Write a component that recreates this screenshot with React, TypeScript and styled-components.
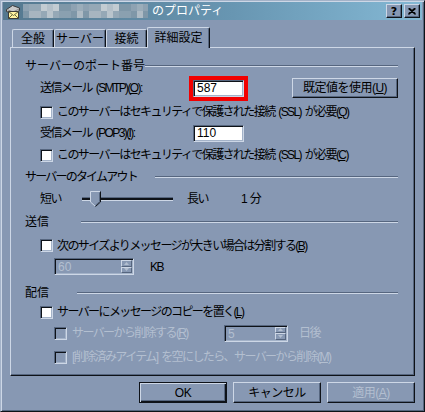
import React from 'react';
import styled, { createGlobalStyle } from 'styled-components';

const C = {
  face: '#8798b3',
  hi: '#cdd7e6',
  light: '#a3b2c8',
  shadow: '#56667f',
  dark: '#0e1218',
  gray: '#b3bfd0',
};

const Global = createGlobalStyle`
  html, body { margin: 0; padding: 0; background: ${C.face}; }
  body {
    font-family: "Liberation Sans", "Noto Sans CJK JP", sans-serif;
    font-size: 12px;
    color: #000;
  }
  #root { width: 425px; height: 412px; }
  u { text-underline-offset: 1px; }
`;

const Window = styled.div`
  box-sizing: border-box;
  width: 425px;
  height: 412px;
  background: ${C.face};
  border: 1px solid;
  border-color: ${C.light} ${C.dark} ${C.dark} ${C.light};
  box-shadow: inset 1px 1px ${C.hi}, inset -1px -1px ${C.shadow};
  padding: 1px 2px 2px 2px;
  display: flex;
  flex-direction: column;
`;

const TitleBar = styled.div`
  height: 18px;
  flex: none;
  display: flex;
  align-items: center;
  padding: 0 2px 0 2px;
  background: linear-gradient(to right, #54788f 0%, #6896b2 55%, #84b8d4 100%);
`;

const TitleText = styled.span`
  color: #fff;
  font-size: 12px;
  line-height: 14px;
  margin-left: 4px;
`;

const CaptionButtons = styled.div`
  margin-left: auto;
  display: flex;
  gap: 2px;
`;

const CapBtn = styled.div`
  box-sizing: border-box;
  width: 16px;
  height: 14px;
  background: ${C.face};
  border: 1px solid;
  border-color: ${C.hi} ${C.dark} ${C.dark} ${C.hi};
  box-shadow: inset -1px -1px ${C.shadow};
  display: flex;
  align-items: center;
  justify-content: center;
  font-family: "DejaVu Sans", sans-serif;
  font-weight: bold;
  font-size: 11px;
  line-height: 11px;
`;

const Body = styled.div`
  flex: 1;
  display: flex;
  flex-direction: column;
  padding: 7px 7px 0 7px;
`;

const TabStrip = styled.div`
  height: 20px;
  display: flex;
  align-items: flex-end;
  padding-left: 2px;
  position: relative;
  z-index: 2;
`;

const Tab = styled.div<{ $w: number; $active?: boolean }>`
  box-sizing: border-box;
  width: ${p => p.$w}px;
  height: ${p => (p.$active ? 21 : 18)}px;
  margin-bottom: ${p => (p.$active ? -1 : 0)}px;
  background: ${C.face};
  border-top: 1px solid ${C.hi};
  border-left: 1px solid ${C.hi};
  border-right: 1px solid ${C.dark};
  box-shadow: inset -1px 0 ${C.shadow};
  border-radius: 2px 2px 0 0;
  display: flex;
  justify-content: center;
  padding-top: ${p => (p.$active ? 3 : 2)}px;
  line-height: 14px;
  font-size: 12px;
`;

const Panel = styled.div`
  box-sizing: border-box;
  height: 329px;
  flex: none;
  border: 1px solid;
  border-color: ${C.hi} ${C.dark} ${C.dark} ${C.hi};
  box-shadow: inset -1px -1px ${C.shadow};
  padding: 9px 16px 0 14px;
  display: flex;
  flex-direction: column;
`;

const GroupHeader = styled.div<{ $h: number; $mt?: number }>`
  height: ${p => p.$h}px;
  margin-top: ${p => p.$mt ?? 0}px;
  display: flex;
  align-items: center;
  flex: none;
`;

const HeaderLabel = styled.span<{ $w: number; $ls?: number }>`
  width: ${p => p.$w}px;
  flex: none;
  line-height: 14px;
  white-space: nowrap;
  letter-spacing: ${p => p.$ls ?? 0}px;
`;

const Rule = styled.div`
  flex: 1;
  height: 0;
  border-top: 1px solid ${C.shadow};
  border-bottom: 1px solid ${C.hi};
`;

const Row = styled.div<{ $h: number; $indent: number }>`
  height: ${p => p.$h}px;
  flex: none;
  display: flex;
  align-items: center;
  padding-left: ${p => p.$indent}px;
  white-space: nowrap;
`;

const Label = styled.span<{ $w?: number; $ml?: number; $disabled?: boolean }>`
  ${p => (p.$w ? `width: ${p.$w}px; flex: none;` : '')}
  margin-left: ${p => p.$ml ?? 0}px;
  line-height: 14px;
  letter-spacing: -1.6px;
  word-spacing: 2px;
  color: ${p => (p.$disabled ? C.gray : '#000')};
`;

const Check = styled.span<{ $disabled?: boolean }>`
  box-sizing: border-box;
  width: 13px;
  height: 13px;
  flex: none;
  background: ${p => (p.$disabled ? C.face : '#fff')};
  border: 1px solid;
  border-color: ${C.shadow} ${C.hi} ${C.hi} ${C.shadow};
  box-shadow: inset 1px 1px ${C.dark}, inset -1px -1px ${C.light};
`;

const TextBox = styled.div`
  box-sizing: border-box;
  width: 51px;
  height: 17px;
  flex: none;
  background: #fff;
  border: 1px solid;
  border-color: ${C.shadow} ${C.hi} ${C.hi} ${C.shadow};
  box-shadow: inset 1px 1px ${C.dark}, inset -1px -1px ${C.light};
  padding-left: 3px;
  line-height: 15px;
  font-size: 12px;
`;

const Highlighted = styled.div`
  outline: 4px solid #f20000;
  display: flex;
`;

const Button = styled.div<{ $w: number; $h: number; $default?: boolean; $disabled?: boolean }>`
  box-sizing: border-box;
  width: ${p => p.$w}px;
  height: ${p => p.$h}px;
  flex: none;
  background: ${C.face};
  border: 1px solid;
  border-color: ${p => (p.$default ? `${C.dark}` : `${C.hi} ${C.dark} ${C.dark} ${C.hi}`)};
  box-shadow: ${p =>
    p.$default
      ? `inset 1px 1px ${C.hi}, inset -1px -1px ${C.dark}, inset -2px -2px ${C.shadow}`
      : `inset -1px -1px ${C.shadow}`};
  display: flex;
  align-items: center;
  justify-content: center;
  line-height: 14px;
  letter-spacing: -0.5px;
  color: ${p => (p.$disabled ? C.gray : '#000')};
`;

const PushRight = styled.div`
  margin-left: auto;
  display: flex;
`;

const SliderTrack = styled.div`
  position: relative;
  width: 91px;
  height: 2px;
  flex: none;
  background: ${C.dark};
  border-top: 1px solid ${C.shadow};
  border-bottom: 1px solid ${C.hi};
`;

const Thumb = styled.svg`
  position: absolute;
  left: 8px;
  top: -7px;
`;

const Spin = styled.div<{ $w: number }>`
  box-sizing: border-box;
  width: ${p => p.$w}px;
  height: 17px;
  flex: none;
  background: ${C.face};
  border: 1px solid;
  border-color: ${C.shadow} ${C.hi} ${C.hi} ${C.shadow};
  box-shadow: inset 1px 1px ${C.dark}, inset -1px -1px ${C.light};
  display: flex;
  padding: 1px;
`;

const SpinText = styled.span`
  flex: 1;
  padding-left: 2px;
  color: ${C.gray};
  line-height: 14px;
`;

const SpinArrows = styled.div`
  width: 11px;
  display: flex;
  flex-direction: column;
`;

const SpinArrow = styled.div`
  box-sizing: border-box;
  flex: 1;
  background: ${C.face};
  border: 1px solid;
  border-color: ${C.hi} ${C.shadow} ${C.shadow} ${C.hi};
  display: flex;
  align-items: center;
  justify-content: center;
`;

const ButtonRow = styled.div`
  margin-top: 6px;
  display: flex;
  justify-content: flex-end;
  gap: 6px;
`;

const Mosaic: React.FC = () => {
  const cols = 21;
  const shades = ['#8ea2b2', '#a7b5c0', '#b9c4cc', '#7f97a8', '#9badba', '#c3ccd2', '#8aa0b0', '#aebbc5', '#95a8b6', '#b4c0c9'];
  const rects: React.ReactNode[] = [];
  for (let r = 0; r < 2; r++) {
    for (let c = 0; c < cols; c++) {
      const idx = (c * 7 + r * 3 + ((c * c) % 5)) % shades.length;
      rects.push(<rect key={`${r}-${c}`} x={c * 6} y={r * 7} width={6} height={7} fill={shades[idx]} />);
    }
  }
  return (
    <svg width={125} height={14} style={{ flex: 'none', marginLeft: 2 }}>
      {rects}
    </svg>
  );
};

const AppIcon: React.FC = () => (
  <svg width={16} height={16} viewBox="0 0 16 16" style={{ flex: 'none' }}>
    <path d="M1.5 6.5 L7.5 2.5 L14.5 5 L14.5 7.5 L8.5 11 L1.5 8.5 Z" fill="#c9c9c9" stroke="#3a3a3a" strokeWidth="1" />
    <path d="M2 6.5 L8 9 L14 6" fill="none" stroke="#8a8a8a" strokeWidth="1" />
    <rect x="3.5" y="8.5" width="10" height="7" fill="#fff3a0" stroke="#3a3a3a" strokeWidth="1" />
    <path d="M3.5 8.5 L8.5 12.5 L13.5 8.5 M3.5 15.5 L7 12 M13.5 15.5 L10 12" fill="none" stroke="#6a6a40" strokeWidth="1" />
  </svg>
);

const CloseGlyph: React.FC = () => (
  <svg width={8} height={7} viewBox="0 0 8 7">
    <path d="M0.5 0.5 L7.5 6.5 M1.5 0.5 L7.5 5.8 M7.5 0.5 L0.5 6.5 M6.5 0.5 L0.5 5.8" stroke="#000" strokeWidth="1.2" fill="none" />
  </svg>
);

const Arrow: React.FC<{ up?: boolean }> = ({ up }) => (
  <svg width={5} height={3} viewBox="0 0 5 3">
    <path d={up ? 'M2.5 0 L5 3 L0 3 Z' : 'M0 0 L5 0 L2.5 3 Z'} fill={C.gray} />
  </svg>
);

const Spinner: React.FC<{ w: number; value: string }> = ({ w, value }) => (
  <Spin $w={w}>
    <SpinText>{value}</SpinText>
    <SpinArrows>
      <SpinArrow><Arrow up /></SpinArrow>
      <SpinArrow><Arrow /></SpinArrow>
    </SpinArrows>
  </Spin>
);

export default function App() {
  return (
    <>
      <Global />
      <Window>
        <TitleBar>
          <AppIcon />
          <Mosaic />
          <TitleText>のプロパティ</TitleText>
          <CaptionButtons>
            <CapBtn>?</CapBtn>
            <CapBtn><CloseGlyph /></CapBtn>
          </CaptionButtons>
        </TitleBar>
        <Body>
          <TabStrip>
            <Tab $w={42}>全般</Tab>
            <Tab $w={52}>サーバー</Tab>
            <Tab $w={41}>接続</Tab>
            <Tab $w={63} $active>詳細設定</Tab>
          </TabStrip>
          <Panel>
            <GroupHeader $h={18}>
              <HeaderLabel $w={120}>サーバーのポート番号</HeaderLabel>
              <Rule />
            </GroupHeader>
            <Row $h={26} $indent={15}>
              <Label $w={153}>送信メール (SMTP)(<u>O</u>):</Label>
              <Highlighted>
                <TextBox>587</TextBox>
              </Highlighted>
              <PushRight>
                <Button $w={106} $h={20}>既定値を使用(<u>U</u>)</Button>
              </PushRight>
            </Row>
            <Row $h={22} $indent={15}>
              <Check />
              <Label $ml={4}>このサーバーはセキュリティで保護された接続 (SSL) が必要(<u>Q</u>)</Label>
            </Row>
            <Row $h={20} $indent={15}>
              <Label $w={153}>受信メール (POP3)(<u>I</u>):</Label>
              <TextBox>110</TextBox>
            </Row>
            <Row $h={24} $indent={15}>
              <Check />
              <Label $ml={4}>このサーバーはセキュリティで保護された接続 (SSL) が必要(<u>C</u>)</Label>
            </Row>
            <GroupHeader $h={20}>
              <HeaderLabel $w={130} $ls={-1.8}>サーバーのタイムアウト</HeaderLabel>
              <Rule />
            </GroupHeader>
            <Row $h={24} $indent={15}>
              <Label $w={42}>短い</Label>
              <SliderTrack>
                <Thumb width={11} height={16} viewBox="0 0 11 16">
                  <path d="M0.5 0.5 H10.5 V11 L5.5 15.5 L0.5 11 Z" fill={C.face} />
                  <path d="M0.5 11 V0.5 H10" stroke={C.hi} fill="none" />
                  <path d="M10.5 0.5 V11 L5.5 15.5" stroke={C.dark} fill="none" />
                  <path d="M9.5 1.5 V10.6 L5.5 14.2" stroke={C.shadow} fill="none" />
                  <path d="M0.5 11 L5 15" stroke={C.hi} fill="none" />
                </Thumb>
              </SliderTrack>
              <Label $w={54} $ml={14}>長い</Label>
              <Label>1 分</Label>
            </Row>
            <GroupHeader $h={22}>
              <HeaderLabel $w={56}>送信</HeaderLabel>
              <Rule />
            </GroupHeader>
            <Row $h={25} $indent={15}>
              <Check />
              <Label $ml={4}>次のサイズよりメッセージが大きい場合は分割する(<u>B</u>)</Label>
            </Row>
            <Row $h={17} $indent={29}>
              <Spinner w={80} value="60" />
              <Label $ml={16}>KB</Label>
            </Row>
            <GroupHeader $h={18} $mt={9}>
              <HeaderLabel $w={52}>配信</HeaderLabel>
              <Rule />
            </GroupHeader>
            <Row $h={20} $indent={15}>
              <Check />
              <Label $ml={4}>サーバーにメッセージのコピーを置く(<u>L</u>)</Label>
            </Row>
            <Row $h={22} $indent={29}>
              <Check $disabled />
              <Label $w={152} $ml={5} $disabled>サーバーから削除する(<u>R</u>)</Label>
              <Spinner w={64} value="5" />
              <Label $ml={11} $disabled>日後</Label>
            </Row>
            <Row $h={26} $indent={29}>
              <Check $disabled />
              <Label $ml={5} $disabled>[削除済みアイテム] を空にしたら、サーバーから削除(<u>M</u>)</Label>
            </Row>
          </Panel>
          <ButtonRow>
            <Button $w={88} $h={21} $default>OK</Button>
            <Button $w={88} $h={21}>キャンセル</Button>
            <Button $w={88} $h={21} $disabled>適用(<u>A</u>)</Button>
          </ButtonRow>
        </Body>
      </Window>
    </>
  );
}
